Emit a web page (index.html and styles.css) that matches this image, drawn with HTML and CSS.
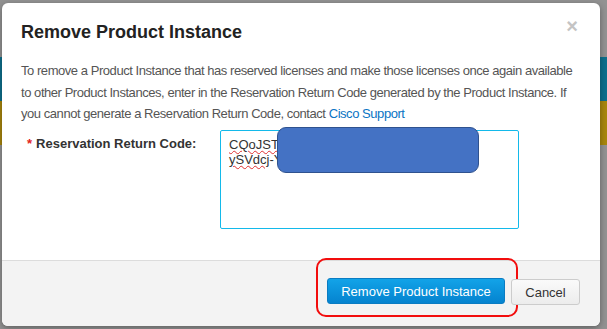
FILE: index.html
```html
<!DOCTYPE html>
<html lang="en">
<head>
    <meta charset="UTF-8">
    <title>Remove Product Instance</title>
    <link rel="stylesheet" href="styles.css">
</head>
<body>
    <div class="page">
        <div class="page-top"></div>
        <div class="band band-teal"></div>
        <div class="band band-yellow"></div>
    </div>

    <div class="modal">
        <div class="modal-header">
            <h2>Remove Product Instance</h2>
            <span class="close">&times;</span>
        </div>
        <div class="modal-body">
            <p class="intro">To remove a Product Instance that has reserved licenses and make those licenses once again available to other Product Instances, enter in the Reservation Return Code generated by the Product Instance. If you cannot generate a Reservation Return Code, contact <a href="#">Cisco Support</a></p>
            <div class="form-row">
                <label class="form-label"><span class="req">*</span>Reservation Return Code:</label>
                <div class="field">
                    <div class="code-box"><span class="squiggle">CQoJST</span>-<br><span class="squiggle">ySVdcj</span>-Y</div>
                    <div class="redact"></div>
                </div>
            </div>
        </div>
        <div class="modal-footer">
            <div class="highlight">
                <button class="btn btn-primary">Remove Product Instance</button>
            </div>
            <button class="btn btn-default">Cancel</button>
        </div>
    </div>
</body>
</html>
```

FILE: styles.css
```css
* {
    margin: 0;
    padding: 0;
    box-sizing: border-box;
}

body {
    width: 607px;
    height: 329px;
    overflow: hidden;
    background-color: #929292;
    font-family: 'Liberation Sans', Arial, sans-serif;
    position: relative;
}

/* page behind the backdrop */
.page-top {
    height: 57px;
}

.band {
    height: 44px;
}

.band-teal {
    background-color: #0d6f8c;
}

.band-yellow {
    background-color: #a8860c;
}

.modal {
    position: absolute;
    top: 3px;
    left: 2px;
    width: 598px;
    height: 323px;
    background-color: #fff;
    border-radius: 6px;
    box-shadow: 0 2px 6px rgba(0,0,0,0.35);
    display: flex;
    flex-direction: column;
    overflow: hidden;
}

.modal-header {
    display: flex;
    justify-content: space-between;
    padding: 19px 22px 0 19px;
    height: 55px;
}

.modal-header h2 {
    font-size: 18px;
    font-weight: bold;
    color: #222;
}

.close {
    font-size: 20px;
    font-weight: bold;
    color: #c4c4c4;
    line-height: 1;
    margin-top: -6px;
}

.modal-body {
    flex: 1;
    padding: 2px 18px 0 19px;
}

.intro {
    font-size: 13px;
    letter-spacing: -0.45px;
    line-height: 21.5px;
    color: #555;
}

.intro a {
    color: #0a74c4;
    text-decoration: none;
}

.form-row {
    display: flex;
    margin-top: 5px;
}

.form-label {
    width: 199px;
    padding: 6px 0 0 6px;
    font-size: 13px;
    font-weight: bold;
    color: #333;
}

.req {
    color: #e2231a;
    margin-right: 4px;
}

.field {
    position: relative;
}

.code-box {
    width: 299px;
    height: 99px;
    border: 1px solid #13b9ea;
    border-radius: 2px;
    padding: 6px 8px;
    font-size: 13px;
    line-height: 15px;
    color: #333;
}

.squiggle {
    text-decoration: underline wavy #e03030;
    text-decoration-thickness: 1px;
}

/* redaction blob drawn over the code */
.redact {
    position: absolute;
    top: -3px;
    left: 57px;
    width: 202px;
    height: 46px;
    background-color: #4472c4;
    border: 1px solid #2f528f;
    border-radius: 9px;
}

.modal-footer {
    height: 66px;
    border-top: 1px solid #dcdcdc;
    background-color: #f3f3f3;
    display: flex;
    justify-content: flex-end;
    align-items: flex-start;
    padding: 0 20px 0 0;
    gap: 6px;
}

.highlight {
    border: 2.5px solid #f20d0d;
    border-radius: 10px;
    padding: 18px 11px 11px 9px;
    margin-top: -3px;
    margin-right: -13px;
}

.btn {
    height: 26px;
    font-family: 'Liberation Sans', Arial, sans-serif;
    font-size: 13px;
    border-radius: 3px;
    cursor: pointer;
}

.btn-primary {
    width: 178px;
    color: #fff;
    border: 1px solid #0a7cc2;
    background: linear-gradient(#12a3e8, #0583cf);
}

.btn-default {
    width: 69px;
    margin-top: 18px;
    color: #333;
    border: 1px solid #ccc;
    background: linear-gradient(#fafafa, #ececec);
    position: relative;
    z-index: 1;
}
```
